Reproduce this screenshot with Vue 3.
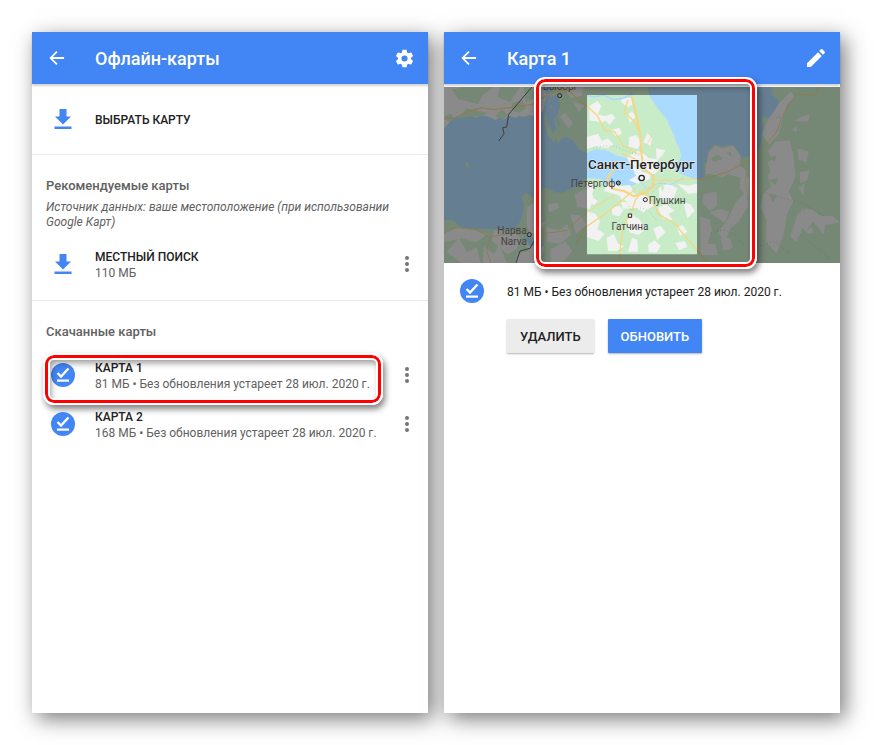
<script setup>
const maps = [
  { name: 'КАРТА 1', info: '81 МБ • Без обновления устареет 28 июл. 2020 г.', marked: true },
  { name: 'КАРТА 2', info: '168 МБ • Без обновления устареет 28 июл. 2020 г.', marked: false }
]
</script>

<template>
  <main class="page">
    <section class="screen">
      <header class="bar">
        <button class="icon-btn" type="button" aria-label="Назад">
          <svg width="20" height="20" viewBox="0 0 24 24"><path fill="#fff" d="M20.5 10.900H7l5.700-5.700-1.500-1.500L2.900 12l8.300 8.300 1.500-1.500L7 13.100h13.500z" /></svg>
        </button>
        <h1>Офлайн-карты</h1>
        <button class="icon-btn end" type="button" aria-label="Настройки">
          <svg width="21" height="21" viewBox="0 0 24 24"><path fill="#fff" d="M19.43 12.98c.04-.32.07-.64.07-.98s-.03-.66-.07-.98l2.11-1.65c.19-.15.24-.42.12-.64l-2-3.46c-.12-.22-.39-.3-.61-.22l-2.49 1c-.52-.4-1.08-.73-1.69-.98l-.38-2.65C14.46 2.18 14.25 2 14 2h-4c-.25 0-.46.18-.49.42l-.38 2.65c-.61.25-1.17.59-1.69.98l-2.49-1c-.23-.09-.49 0-.61.22l-2 3.46c-.13.22-.07.49.12.64l2.11 1.65c-.04.32-.07.65-.07.98s.03.66.07.98l-2.11 1.65c-.19.15-.24.42-.12.64l2 3.46c.12.22.39.3.61.22l2.49-1c.52.4 1.08.73 1.69.98l.38 2.65c.03.24.24.42.49.42h4c.25 0 .46-.18.49-.42l.38-2.65c.61-.25 1.17-.59 1.69-.98l2.49 1c.23.09.49 0 .61-.22l2-3.46c.12-.22.07-.49-.12-.64zM12 15.500a3.500 3.500 0 1 1 0-7 3.500 3.500 0 0 1 0 7z" /></svg>
        </button>
      </header>

      <button class="row pick" type="button">
        <svg class="lead" width="24" height="24" viewBox="0 0 24 24"><path fill="#4285f4" d="M8.500 2h7v7.500H20L12 17.500 4 9.500h4.500zM3.500 19.500h17v2.500h-17z" /></svg>
        <span class="name">ВЫБРАТЬ КАРТУ</span>
      </button>

      <section class="group">
        <h2>Рекомендуемые карты</h2>
        <p class="hint">Источник данных: ваше местоположение (при использовании Google Карт)</p>
        <div class="item">
          <button class="row" type="button">
            <svg class="lead" width="24" height="24" viewBox="0 0 24 24"><path fill="#4285f4" d="M8.500 2h7v7.500H20L12 17.500 4 9.500h4.500zM3.500 19.500h17v2.500h-17z" /></svg>
            <span class="text"><span class="name">МЕСТНЫЙ ПОИСК</span><span class="info">110 МБ</span></span>
          </button>
          <button class="more" type="button" aria-label="Ещё"><i></i><i></i><i></i></button>
        </div>
      </section>

      <section class="group">
        <h2>Скачанные карты</h2>
        <div class="list">
          <div v-for="m in maps" :key="m.name" class="item">
            <button class="row" type="button">
              <svg class="lead" width="24" height="24" viewBox="0 0 24 24"><circle cx="12" cy="12" r="12" fill="#4285f4" /><path d="M6.500 10l3.500 3.500 7.500-8" fill="none" stroke="#fff" stroke-width="2.400" /><path fill="#fff" d="M6 16.500h12v2.200H6z" /></svg>
              <span class="text"><span class="name">{{ m.name }}</span><span class="info">{{ m.info }}</span></span>
            </button>
            <button class="more" type="button" aria-label="Ещё"><i></i><i></i><i></i></button>
            <span v-if="m.marked" class="frame row-frame"></span>
          </div>
        </div>
      </section>
    </section>

    <section class="screen">
      <header class="bar">
        <button class="icon-btn" type="button" aria-label="Назад">
          <svg width="20" height="20" viewBox="0 0 24 24"><path fill="#fff" d="M20.5 10.900H7l5.700-5.700-1.500-1.500L2.900 12l8.300 8.300 1.500-1.500L7 13.100h13.500z" /></svg>
        </button>
        <h1>Карта 1</h1>
        <button class="icon-btn end" type="button" aria-label="Переименовать">
          <svg width="24" height="24" viewBox="0 0 24 24"><path fill="#fff" d="M3 17.250V21h3.750L17.810 9.940l-3.750-3.750zM20.710 7.040a1 1 0 0 0 0-1.410l-2.340-2.340a1 1 0 0 0-1.410 0l-1.830 1.830 3.750 3.750z" /></svg>
        </button>
      </header>

      <div class="map-wrap">
        <svg class="map" viewBox="0 0 1188 528" preserveAspectRatio="xMidYMid slice">
          <rect width="1188" height="528" fill="#aadaff" />
          <!-- coasts -->
          <g fill="#c8ecc8">
            <path fill="#f2f2f2" d="M0 0H300L306 22 302 50 296 78 288 66 280 74 270 88 255 84 240 90 225 86 215 92 195 86 180 98 165 90 155 100 140 92 128 88 110 86 92 92 75 80 60 86 48 92 38 88 22 98 12 112 0 124z" />
            <path d="M330 0H612L616 28 628 44 640 62 652 78 668 96 676 116 688 140 696 164 706 184 712 208 706 220 690 234 686 244 700 252 714 262 736 270 758 280 783 270 780 230 790 222 793 192 813 172 830 178 868 174 893 212 918 206 948 182 958 127 953 87 983 97 1006 42 983 22V0H1188V528H0V400L12 398 30 400 48 418 66 426H212L228 405 236 380 240 350 232 330 246 318 262 326 266 336 274 318 290 312 300 302 318 306 332 316 358 317 378 306 400 296 428 272 470 276 486 294 520 292 562 298 578 290 580 262 568 230 548 212 520 206 488 190 456 186 428 197 408 188 388 162 370 150 356 152 342 168 326 140 336 126 330 98 338 76 330 58 322 64 314 44z" />
            <path d="M302 74l8 30 12 28 14 22-6 12-18-18-12-42zM66 222l8 10 2 14-12-10z" />
            <path d="M24 8l36-8h90l-34 24-14 28-60-16zM168 0h60l-30 46-38-16zM44 92l24-28 62 14-20 10zM204 48l30-8 12 24-22 14-20-8zM238 0h46l-8 32-30 14zM2 88l18-8 12 12-20 12zM152 88l22-20 18 16-14 12z" />
          </g>

          <!-- open land -->
          <g fill="#f2f2f2">
            <path d="M0 440l40-18 52 8 38 10-32 26-46-12-52 12zM150 430l54 4 26 18-12 34-28 16-46-40zM8 494l38-42 22 44 30-16 12 48H52zM120 478l30 24 16-30 22 56h-72zM250 360l20-12 8 50 26 10-18 26-26 12-12-34zM240 464l38-12 22 30-10 46h-78l16-30 26-6zM312 354l28-8 6 16-30 14zM306 420l38 10 26-18 12 30-34 28-38-6zM320 486l44-22 20 28-24 30-40 6zM392 320l32-14 24 22-10 38-38-6zM378 382l34 4 14 28-30 26zM360 0h60l-8 26-32 8zM348 88l16-10 24 32-14 14zM386 42l34 14-16 20z" />
            <path d="M436 58l24-16 12 14-10 26 38 10-24 14-40-6zM476 90l26-10 12 12-18 22zM536 30l26 4 8 16-18 10-22-16zM550 84l14-12 10 18-16 18zM428 150l34-10 12 22 18-8 16 18-16 12-36-6-28 8zM500 130l26-8 8 18-18 8zM556 150l20-6 18 22-14 20-26-8zM610 138l14 16-4 22-22-10zM636 184l28 6-8 14-18 18zM548 210l34-18 26 14 20 26-10 44-38 14-26-10 22-14zM604 212l32 4 18 22-20 22-26 2zM492 286l36 12 30-4 14 26-22 16-36-14-34-10zM528 324l28 6 18-10 38 8 16 28-30 20-24-14-38 4zM428 286l22 8-6 36 18 12-12 12-22-10zM428 372l26 8 14 22-8 24 22 14-18 22-36-12zM502 364l24-8 12 14-12 18-20-4zM548 394l18-10 22 14 16 28-20 18-28-8zM644 304l28-16 28 16-10 28-16 14-28-12zM700 290l32 6 27-6v28l-26 2-16-14zM642 362l22-10 28 18-18 12 12 18-30-6zM718 346l22 6 12 20-22 22zM628 424l22-8 14 20-24 24zM698 422l18-8 14 22-22 10zM488 452l22-10 12 28 18 8-22 14h-26zM564 452l16 6 2 36h-30zM612 474l20-14 18 18-12 18h-24zM694 468l28-6 8 18-24 10z" />
            <path d="M783 260l10-62 20-22 22 8 34-8 22 32-4 26 24 22-24 16-34-12-18 12-30-10zM778 322l40-8 2 40-22 18-22-24zM768 388l30 10 6 30-14 42 24 2 8 32h-52zM796 376l34-10 26 8-14 34zM890 272l12-16 14 22-4 54-26-30zM876 344l30-30 6 44-28 46-24 20-18 40-20-26 28-40zM830 456l28-4 8 30-28 10zM970 102l38-56 32-32 14 16-24 20-14 46-12 46-28 30-22-28zM994 164l42-4 12 44 6 66-20 44 14 28-20 42-8 54-22 62-32-36 2-64-18-36 8-44 24-20-10-32 16-38-16-38zM972 228l16-18 10 26-20 14zM1060 184l34 10-6 32-24-8zM1068 256l28-6-6 30-22 8zM1070 90l28-10-6 24-42-2zM1046 128l14-12-2 20zM1064 304l18-16-4 36zM1084 364l24 6 20 16 38 2 22 18-44 8-6 28-30-38-22 28-20-16zM1060 384l20-22-8 74-16 30-16-20zM1084 434l18-14 8 16-14 6z" />
          </g>
          <g fill="#c8ecc8">
            <path d="M800 214l24-12 12 14-28 8zM846 198l14-4 4 16zM968 214l30-10-6 20zM974 280l30-8-10 22zM976 318l24 8-14 20zM590 252l12-10 8 18zM522 344l16-8 12 10zM560 230l12 8-8 8zM650 292l12 10-8 12z" />
          </g>

          <!-- rivers and inlets -->
          <path d="M240 446l26 8 34 16-8 12-36-6zM342 22l6 36-10 32-10-30-12-8 6-22z" fill="#aadaff" />
          <g fill="none" stroke="#aadaff">
            <path d="M430 26l18 4 30-6 30 14 28-4 32-14" stroke-width="5" />
            <path d="M578 272l30 34 34-18 40 4 38-20" stroke-width="3" />
            <path d="M342 20l-8 60 12 40" stroke-width="4" />
          </g>

          <!-- roads -->
          <g fill="none" stroke="#f7d682" stroke-linejoin="round">
            <path d="M0 96l34-4 44-20 34-10 36 6 62-8 54-8 38-24 44-18 28 0 22 22 34 26 30 28 22 44 30 4 24 40 44 26" stroke-width="4" />
            <path d="M0 428l40-6 52 4 46 24 64-12 76 4 50-6 42-6 36-36 46-34 60-36" stroke-width="3" />
            <path d="M138 450l-10 40 12 38" stroke-width="3" />
            <path d="M562 28l14 50 12 60 4 62 8 46 28 22 0 30-24 20-34 10-30-16-32-6-20-28 18-26 6-28" stroke-width="6" />
            <path d="M552 40l-12 36 30 26 20 42M536 200l42 18 16 32M594 310l-20 30-12 34-22 38-10 58-4 58M572 308l-46 38-42 34-56 38-32 50M600 314l28 30 16 38 46 26 42 50 60 70" stroke-width="4" />
            <path d="M624 278l50 2 62-4 44 2 72-24 58-30 44-40 42-46 24-60 36-56 56 2 12-24-34-16" stroke-width="3" />
            <path d="M430 248l34-10 30 4 26-24M584 202l24-28 20-36M600 310l46-22 20-12M908 240l-4 50 8 44M990 340l-28-28-18-32" stroke-width="2" />
          </g>
          <path d="M264 0l-26 30-20 24-24 28-6 38-12 2 4 18-16 22M276 452l-18 32-30 8-12 36" fill="none" stroke="#595959" stroke-width="3" />
          <g fill="none" stroke="#8b9a8b" stroke-width="2" stroke-dasharray="2 8">
            <path d="M448 182l34-6 36 4 34 14 34 10M550 350l12 20 32-8 26 14 18 24M650 290l-26 28 18 26M800 438l40-10 38 20 24 30M940 480l52-18 44 38M1008 90l-30 8M1010 332l60 14 70 40M1070 446l42 30 48 42" />
          </g>

          <!-- area outside of the saved region -->
          <path fill="#1f1f1f" fill-opacity=".49" fill-rule="evenodd" d="M0 0H1188V528H0zM429 24V502H759V24z" />

          <g fill="#f2f2f2" stroke="#222" stroke-width="3">
            <circle cx="593" cy="273" r="8" stroke-width="4" />
            <circle cx="604" cy="338" r="6" />
            <path d="M553 381h10v10h-10z" />
            <g fill="#8b8b8b"><circle cx="523" cy="288" r="6" /><circle cx="256" cy="443" r="6" /><circle cx="347" cy="26" r="6" /></g>
          </g>
          <g class="labels">
            <text x="592" y="247" class="city" text-anchor="middle">Санкт-Петербург</text>
            <text x="380" y="300">Петергоф</text>
            <text x="614" y="351">Пушкин</text>
            <text x="558" y="429" text-anchor="middle">Гатчина</text>
            <text x="160" y="440">Нарва</text>
            <text x="170" y="473">Narva</text>
            <text x="296" y="10">Выборг</text>
          </g>
        </svg>
        <span class="frame map-frame"></span>
      </div>

      <div class="status">
        <svg class="lead" width="24" height="24" viewBox="0 0 24 24"><circle cx="12" cy="12" r="12" fill="#4285f4" /><path d="M6.500 10l3.500 3.500 7.500-8" fill="none" stroke="#fff" stroke-width="2.400" /><path fill="#fff" d="M6 16.500h12v2.200H6z" /></svg>
        <p>81 МБ • Без обновления устареет 28 июл. 2020 г.</p>
      </div>
      <div class="actions">
        <button class="btn" type="button">УДАЛИТЬ</button>
        <button class="btn primary" type="button">ОБНОВИТЬ</button>
      </div>
    </section>
  </main>
</template>

<style>
body { background: #fff; }
</style>

<style scoped>
* { box-sizing: border-box; }
.page {
  display: grid;
  grid-template-columns: 1fr 1fr;
  gap: 16px;
  min-height: 100vh;
  padding: 32px 39px 32px 32px;
  font-family: Roboto, "Liberation Sans", sans-serif;
  color: #212121;
}
.screen {
  background: #fff;
  box-shadow: 5px 6px 20px rgba(0, 0, 0, .52);
  min-width: 0;
}
button {
  font: inherit;
  color: inherit;
  background: none;
  border: 0;
  padding: 0;
  text-align: left;
}
h1, h2, p { margin: 0; }
.bar {
  display: flex;
  align-items: center;
  height: 52px;
  padding: 0 12px 0 15px;
  background: #4285f4;
  color: #fff;
  box-shadow: 0 2px 2px rgba(0, 0, 0, .18);
}
.icon-btn { display: flex; width: 48px; }
.icon-btn.end { width: 24px; margin-left: auto; justify-content: center; }
.bar h1 { padding-top: 2px; font-size: 18px; line-height: 24px; font-weight: 500; }
.row { display: flex; align-items: center; flex: 1; min-width: 0; }
.lead { flex: none; margin-right: 20px; }
.pick { width: 100%; height: 70px; padding-left: 19px; }
.name { padding-top: 1px; font-size: 12px; line-height: 16px; font-weight: 500; }
.text { display: flex; flex-direction: column; white-space: nowrap; padding-top: 1px; }
.info { font-size: 12px; line-height: 16px; color: #616161; }
.group { border-top: 1px solid #ebebeb; padding: 22px 0 12px; }
.group h2 { padding: 0 14px; font-size: 13px; line-height: 18px; font-weight: 500; color: #616161; }
.hint { padding: 5px 14px 0; font-size: 12px; line-height: 15px; font-style: italic; color: #616161; }
.item { position: relative; display: flex; align-items: center; height: 49px; padding: 0 12px 0 19px; }
.hint + .item { margin-top: 9px; }
.list { padding-top: 9px; }
.more { display: flex; flex-direction: column; align-items: center; gap: 2px; width: 18px; }
.more i { width: 4px; height: 4px; border-radius: 50%; background: #757575; }
.frame {
  position: absolute;
  border: 2px solid #fff;
  border-radius: 11px;
  pointer-events: none;
  box-shadow: 2px 4px 6px rgba(0, 0, 0, .5), inset 0 0 0 3px #f00, inset 0 0 0 5px #fff, inset 2px 4px 6px 4px rgba(0, 0, 0, .4);
}
.row-frame { left: 11px; right: 45px; top: 3px; height: 52px; }
.map-wrap { position: relative; margin-top: 3px; }
.map { display: block; width: 100%; height: 176px; }
.map-frame { left: 23%; right: 21%; top: -10px; bottom: -6px; margin-left: -1px; }
.labels { font-size: 30px; fill: #444; }
.city { font-size: 40px; font-weight: 500; fill: #222; stroke: #f2f2f2; stroke-width: 3px; paint-order: stroke; }
.status { display: flex; align-items: center; padding: 16px 16px 0; font-size: 12px; line-height: 16px; }
.status .lead { margin-right: 23px; }
.status p { padding-top: 1px; }
.actions { display: flex; gap: 14px; padding: 16px 0 0 63px; }
.btn {
  height: 34px;
  padding: 0 13px;
  font-size: 13px;
  font-weight: 500;
  background: #ececec;
  border-radius: 1px;
  box-shadow: 0 1px 2px rgba(0, 0, 0, .3);
}
.btn.primary { background: #4285f4; color: #fff; }
</style>
